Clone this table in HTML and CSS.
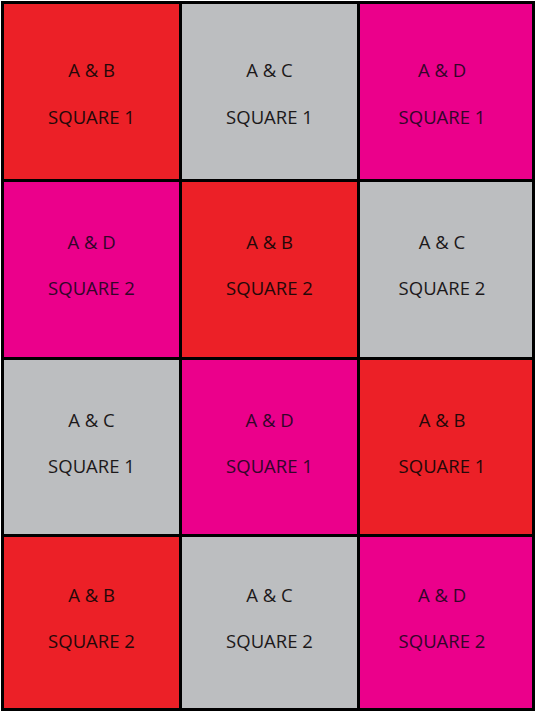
FILE: index.html
```html
<!DOCTYPE html>
<html>
<head>
<meta charset="utf-8">
<link rel="stylesheet" href="styles.css">
</head>
<body>
<div class="grid">
  <div class="cell red top"><span>A &amp; B</span><span>SQUARE 1</span></div>
  <div class="cell gray top"><span>A &amp; C</span><span>SQUARE 1</span></div>
  <div class="cell pink top last"><span>A &amp; D</span><span>SQUARE 1</span></div>
  <div class="cell pink"><span>A &amp; D</span><span>SQUARE 2</span></div>
  <div class="cell red"><span>A &amp; B</span><span>SQUARE 2</span></div>
  <div class="cell gray last"><span>A &amp; C</span><span>SQUARE 2</span></div>
  <div class="cell gray"><span>A &amp; C</span><span>SQUARE 1</span></div>
  <div class="cell pink"><span>A &amp; D</span><span>SQUARE 1</span></div>
  <div class="cell red last"><span>A &amp; B</span><span>SQUARE 1</span></div>
  <div class="cell red"><span>A &amp; B</span><span>SQUARE 2</span></div>
  <div class="cell gray"><span>A &amp; C</span><span>SQUARE 2</span></div>
  <div class="cell pink last"><span>A &amp; D</span><span>SQUARE 2</span></div>
</div>
</body>
</html>
```
FILE: styles.css
```css
html, body {
  margin: 0;
  padding: 0;
  background: #ffffff;
}
.grid {
  margin: 1px;
  width: fit-content;
  display: grid;
  grid-template-columns: 175px 175px 172px;
  grid-template-rows: 175px 175px 174px 171px;
  gap: 3px;
  padding: 3px;
  background: #000000;
}
.cell {
  display: flex;
  flex-direction: column;
  align-items: center;
  justify-content: center;
  gap: 22px;
  padding-bottom: 9px;
  box-sizing: border-box;
  font-family: "Open Sans", "Liberation Sans", sans-serif;
  font-size: 18.5px;
  line-height: 24px;
}
.cell.top {
  padding-bottom: 0;
  padding-top: 4px;
  gap: 23px;
}
.cell.last {
  padding-right: 8px;
}
.red {
  background: #ec2027;
  color: #250809;
}
.gray {
  background: #bcbec0;
  color: #1c191a;
}
.pink {
  background: #eb008b;
  color: #33052a;
}
```
